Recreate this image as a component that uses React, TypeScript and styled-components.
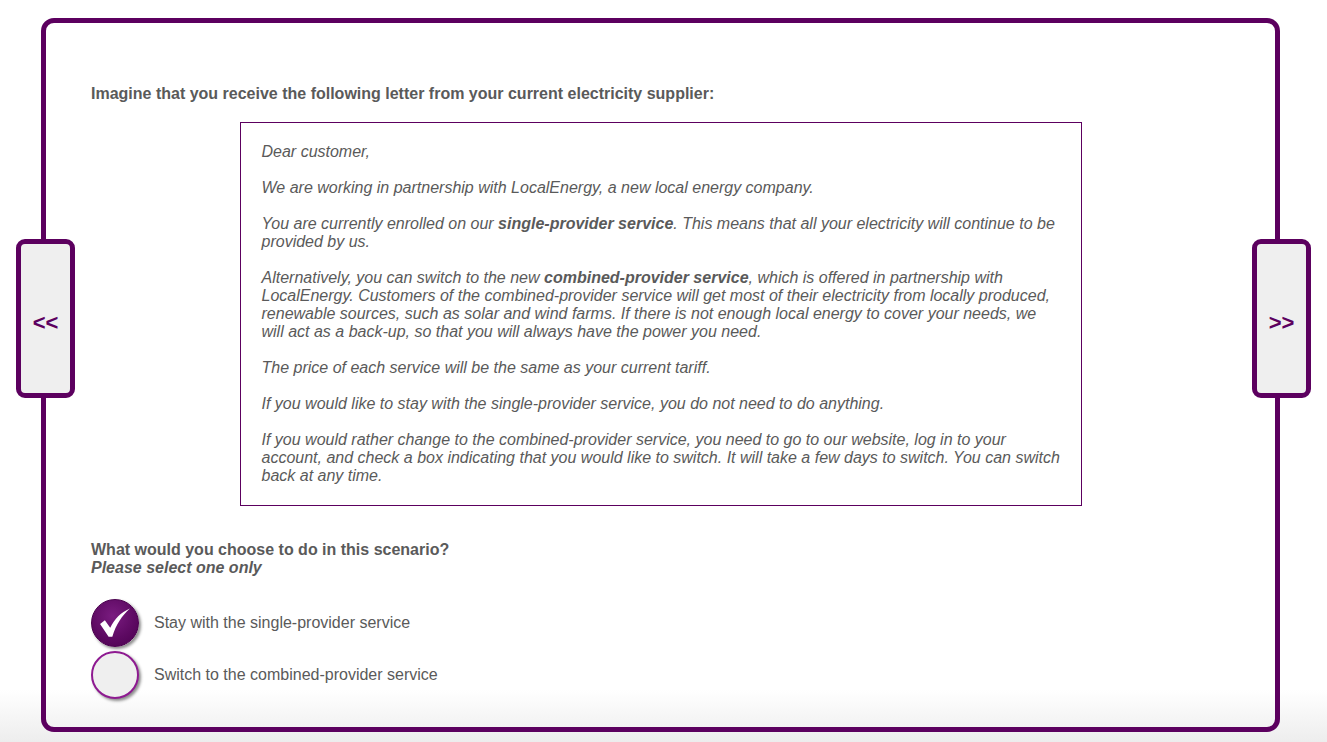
import React from "react";
import styled, { createGlobalStyle } from "styled-components";

const Global = createGlobalStyle`
  html, body { margin: 0; padding: 0; }
  body {
    font-family: "Liberation Sans", Arial, sans-serif;
    color: #5a5a5a;
    background: linear-gradient(to bottom, #ffffff 0px, #ffffff 690px, #ededed 742px);
    min-height: 742px;
  }
`;

const PURPLE = "#5c005f";

const Page = styled.div`
  position: relative;
  width: 1327px;
  height: 742px;
  padding-top: 18px;
  box-sizing: border-box;
  overflow: hidden;
`;

const Frame = styled.div`
  margin-left: 41px;
  width: 1239px;
  height: 714px;
  box-sizing: border-box;
  border: 5px solid ${PURPLE};
  border-radius: 13px;
  padding: 62px 45px 0 45px;
  display: flex;
  flex-direction: column;
`;

const Intro = styled.p`
  margin: 0;
  font-size: 16px;
  line-height: 18px;
  font-weight: bold;
`;

const Letter = styled.div`
  margin: 19px auto 0 auto;
  width: 842px;
  box-sizing: border-box;
  border: 1px solid ${PURPLE};
  padding: 20px 18px 20px 21px;
  font-style: italic;
  font-size: 16px;
  line-height: 18px;
`;

const Para = styled.p`
  margin: 0 0 18px 0;
  &:last-child { margin-bottom: 0; }
  b { font-weight: bold; }
`;

const Question = styled.div`
  margin-top: 35px;
  font-size: 16px;
  line-height: 18px;
  font-weight: bold;
`;

const Hint = styled.div`
  font-style: italic;
`;

const Options = styled.div`
  margin-top: 22px;
  display: flex;
  flex-direction: column;
  gap: 4px;
`;

const Option = styled.label`
  display: flex;
  align-items: center;
  gap: 15px;
  font-size: 16px;
  cursor: pointer;
`;

const Circle = styled.span<{ $checked: boolean }>`
  width: 48px;
  height: 48px;
  box-sizing: border-box;
  border-radius: 50%;
  display: flex;
  align-items: center;
  justify-content: center;
  flex-shrink: 0;
  box-shadow: 2px 2px 3px rgba(0, 0, 0, 0.45);
  ${(p) =>
    p.$checked
      ? `background: radial-gradient(circle at 45% 35%, #7a1c80 0%, #5e0a63 55%, #4a004e 100%);
         border: 1px solid #4a004e;`
      : `background: #efefef;
         border: 2px solid #8e1a91;`}
`;

const NavButton = styled.button<{ $side: "left" | "right" }>`
  position: absolute;
  top: 239px;
  ${(p) => (p.$side === "left" ? "left: 16px;" : "left: 1252px;")}
  width: 59px;
  height: 159px;
  box-sizing: border-box;
  border: 5px solid ${PURPLE};
  border-radius: 9px;
  background: #efefef;
  color: ${PURPLE};
  font-family: "Liberation Sans", Arial, sans-serif;
  font-weight: bold;
  font-size: 22px;
  padding: 8px 0 0 0;
  display: flex;
  align-items: center;
  justify-content: center;
  cursor: pointer;
`;

const Check = () => (
  <svg width="32" height="30" viewBox="0 0 30 28">
    <path
      d="M1 15 L5.5 11.5 L10.5 18.5 C15 10 20 4.5 29 0.5 C21.5 7.5 16 15 12.5 27 L9 27 Z"
      fill="#ffffff"
    />
  </svg>
);

export default function App() {
  return (
    <>
      <Global />
      <Page>
        <Frame>
          <Intro>Imagine that you receive the following letter from your current electricity supplier:</Intro>
          <Letter>
            <Para>Dear customer,</Para>
            <Para>We are working in partnership with LocalEnergy, a new local energy company.</Para>
            <Para>
              You are currently enrolled on our <b>single-provider service</b>. This means that all your electricity will continue to be provided by us.
            </Para>
            <Para>
              Alternatively, you can switch to the new <b>combined-provider service</b>, which is offered in partnership with LocalEnergy. Customers of the combined-provider service will get most of their electricity from locally produced, renewable sources, such as solar and wind farms. If there is not enough local energy to cover your needs, we will act as a back-up, so that you will always have the power you need.
            </Para>
            <Para>The price of each service will be the same as your current tariff.</Para>
            <Para>If you would like to stay with the single-provider service, you do not need to do anything.</Para>
            <Para>
              If you would rather change to the combined-provider service, you need to go to our website, log in to your account, and check a box indicating that you would like to switch. It will take a few days to switch. You can switch back at any time.
            </Para>
          </Letter>
          <Question>
            What would you choose to do in this scenario?
            <Hint>Please select one only</Hint>
          </Question>
          <Options>
            <Option>
              <Circle $checked={true}>
                <Check />
              </Circle>
              Stay with the single-provider service
            </Option>
            <Option>
              <Circle $checked={false} />
              Switch to the combined-provider service
            </Option>
          </Options>
        </Frame>
        <NavButton $side="left">&lt;&lt;</NavButton>
        <NavButton $side="right">&gt;&gt;</NavButton>
      </Page>
    </>
  );
}
